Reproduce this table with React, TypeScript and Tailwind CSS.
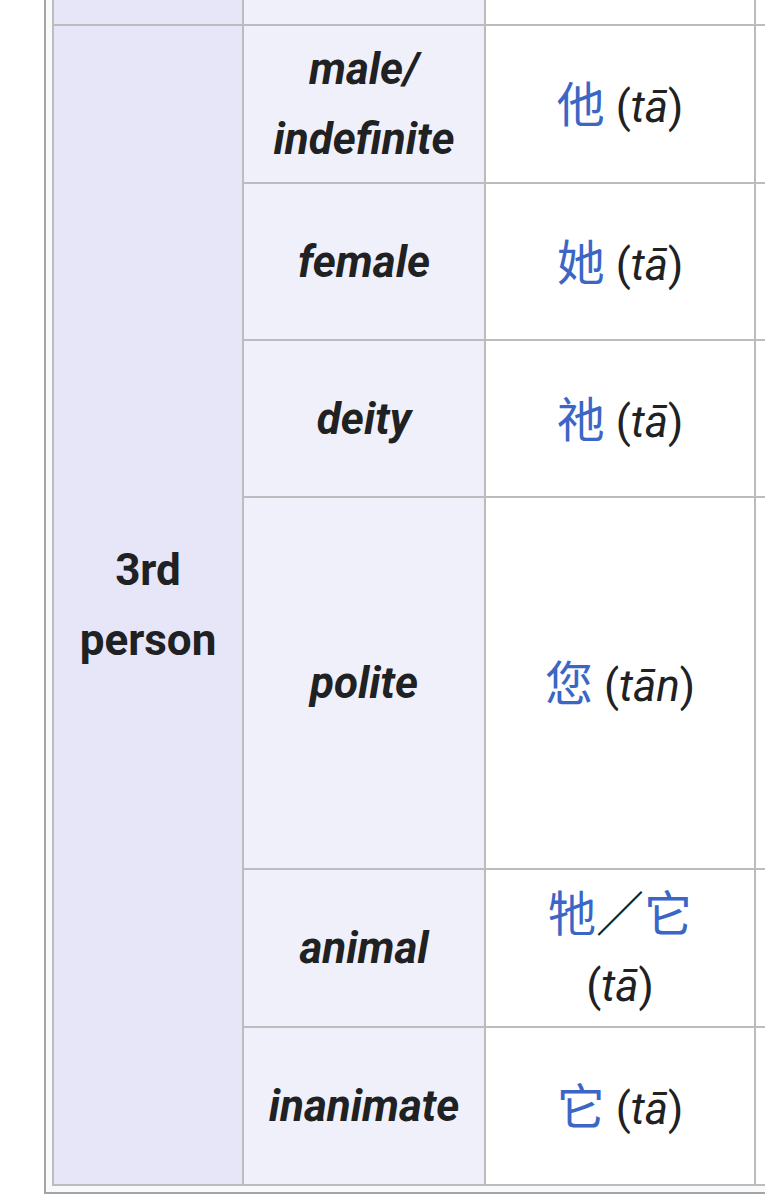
import React from "react";

const F = { fontFamily: "Roboto, 'Noto Sans CJK SC', sans-serif" };
const CJK = { fontFamily: "'Noto Sans CJK SC', sans-serif" };

function Han({ c }: { c: string }) {
  return (
    <span className="text-[#3b66c6] text-[48px]" style={CJK}>
      {c}
    </span>
  );
}

function Pron({ p }: { p: string }) {
  return (
    <span>
      (<i>{p}</i>)
    </span>
  );
}

const rows = [
  { label: ["male/", "indefinite"], han: "他", p: "tā" },
  { label: ["female"], han: "她", p: "tā" },
  { label: ["deity"], han: "祂", p: "tā" },
  { label: ["polite"], han: "您", p: "tān" },
];

export default function App() {
  return (
    <div className="w-[765px] h-[1200px] overflow-hidden bg-white text-[#202122]" style={F}>
      <div className="ml-[44px] w-[800px] border-l-2 border-b-2 border-[#a4a4a4] bg-[#f8f9fa] pl-[6px] pb-[6px]">
        <div className="grid grid-cols-[188px_240px_268px_200px] grid-rows-[24px_156px_155px_155px_370px_156px_156px] gap-[2px] bg-[#bbbcbe] border-l-2 border-b-2 border-[#bbbcbe] text-[44px] leading-[70px]">
          <div className="bg-[#e6e6f8]" />
          <div className="bg-[#f0f0fa]" />
          <div className="bg-white" />
          <div className="bg-white" />

          <div className="row-span-6 bg-[#e6e6f8] flex items-center justify-center text-center font-bold">
            3rd
            <br />
            person
          </div>

          {rows.map((r, i) => (
            <React.Fragment key={i}>
              <div className="bg-[#f0f0fa] flex flex-col items-center justify-center text-center font-bold italic">
                {r.label.map((l) => (
                  <span key={l}>{l}</span>
                ))}
              </div>
              <div className="bg-white flex items-center justify-center text-center">
                <span>
                  <Han c={r.han} /> <Pron p={r.p} />
                </span>
              </div>
              <div className="bg-white" />
            </React.Fragment>
          ))}

          <div className="bg-[#f0f0fa] flex items-center justify-center font-bold italic">animal</div>
          <div className="bg-white flex flex-col items-center justify-center text-center">
            <span>
              <Han c="牠" />
              <span className="text-[48px]" style={CJK}>／</span>
              <Han c="它" />
            </span>
            <Pron p="tā" />
          </div>
          <div className="bg-white" />

          <div className="bg-[#f0f0fa] flex items-center justify-center font-bold italic">inanimate</div>
          <div className="bg-white flex items-center justify-center text-center">
            <span>
              <Han c="它" /> <Pron p="tā" />
            </span>
          </div>
          <div className="bg-white" />
        </div>
      </div>
    </div>
  );
}
